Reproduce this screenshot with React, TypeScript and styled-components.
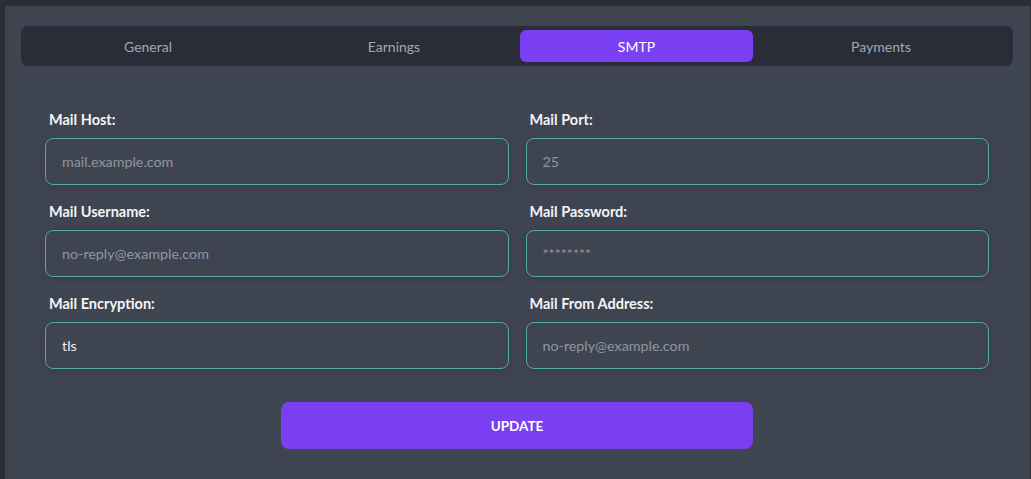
import * as React from 'react'
import styled, { createGlobalStyle } from 'styled-components'

const GlobalStyle = createGlobalStyle`
  html, body {
    margin: 0;
    padding: 0;
    height: 100%;
    background: #2b2e37;
    font-family: Lato, "Open Sans", sans-serif;
  }
  #root {
    height: 100%;
  }
  * {
    box-sizing: border-box;
  }
`

const Page = styled.div`
  height: 100%;
  padding: 6px 1px 0 5px;
`

const Panel = styled.div`
  height: 100%;
  background: #3f4451;
  padding: 20px 17px 0 16px;
`

const TabBar = styled.div`
  height: 40px;
  background: #2a2d37;
  border-radius: 7px;
  padding: 4px;
  display: grid;
  grid-template-columns: 246fr 246fr 236fr 256fr;
`

const Tab = styled.button<{ $active?: boolean }>`
  border: none;
  border-radius: 6px;
  margin-left: ${props => (props.$active ? '3px' : '0')};
  background: ${props => (props.$active ? '#7b3ff3' : 'transparent')};
  color: ${props => (props.$active ? '#ffffff' : '#a3a7b0')};
  font-family: inherit;
  font-size: 14px;
  cursor: pointer;
  padding: 0;
`

const Form = styled.form`
  margin: 46px 24px 0 24px;
`

const Grid = styled.div`
  display: grid;
  grid-template-columns: 1fr 1fr;
  column-gap: 17px;
  row-gap: 19px;
`

const Field = styled.div`
  display: flex;
  flex-direction: column;
`

const Label = styled.label`
  font-size: 14.5px;
  font-weight: 700;
  line-height: 16px;
  color: #f3f4f6;
  padding-left: 4px;
  margin-bottom: 10px;
`

const Input = styled.input`
  height: 47px;
  background: #3f4451;
  border: 1px solid #4fae99;
  border-radius: 8px;
  padding: 0 16px;
  color: #eef0f3;
  font-family: inherit;
  font-size: 14.3px;
  box-shadow: 0 2px 6px rgba(0, 0, 0, 0.12);
  &::placeholder {
    color: #8f96a3;
  }
  &:focus {
    outline: none;
  }
`

const Actions = styled.div`
  display: flex;
  justify-content: center;
  margin-top: 33px;
`

const UpdateButton = styled.button`
  width: 472px;
  height: 47px;
  border: none;
  border-radius: 8px;
  background: #7b3ff3;
  color: #ffffff;
  font-family: inherit;
  font-weight: 700;
  font-size: 13.5px;
  cursor: pointer;
`

const tabs = ['General', 'Earnings', 'SMTP', 'Payments']

const fields = [
  { id: 'host', label: 'Mail Host:', placeholder: 'mail.example.com' },
  { id: 'port', label: 'Mail Port:', placeholder: '25' },
  { id: 'username', label: 'Mail Username:', placeholder: 'no-reply@example.com' },
  { id: 'password', label: 'Mail Password:', placeholder: '********' },
  { id: 'encryption', label: 'Mail Encryption:', placeholder: '', value: 'tls' },
  { id: 'from', label: 'Mail From Address:', placeholder: 'no-reply@example.com' },
]

export default function App() {
  const [active, setActive] = React.useState('SMTP')
  return (
    <>
      <GlobalStyle />
      <Page>
        <Panel>
          <TabBar>
            {tabs.map(t => (
              <Tab key={t} type="button" $active={t === active} onClick={() => setActive(t)}>
                {t}
              </Tab>
            ))}
          </TabBar>
          <Form onSubmit={e => e.preventDefault()}>
            <Grid>
              {fields.map(f => (
                <Field key={f.id}>
                  <Label htmlFor={f.id}>{f.label}</Label>
                  <Input id={f.id} type="text" placeholder={f.placeholder} defaultValue={f.value} />
                </Field>
              ))}
            </Grid>
            <Actions>
              <UpdateButton type="submit">UPDATE</UpdateButton>
            </Actions>
          </Form>
        </Panel>
      </Page>
    </>
  )
}
